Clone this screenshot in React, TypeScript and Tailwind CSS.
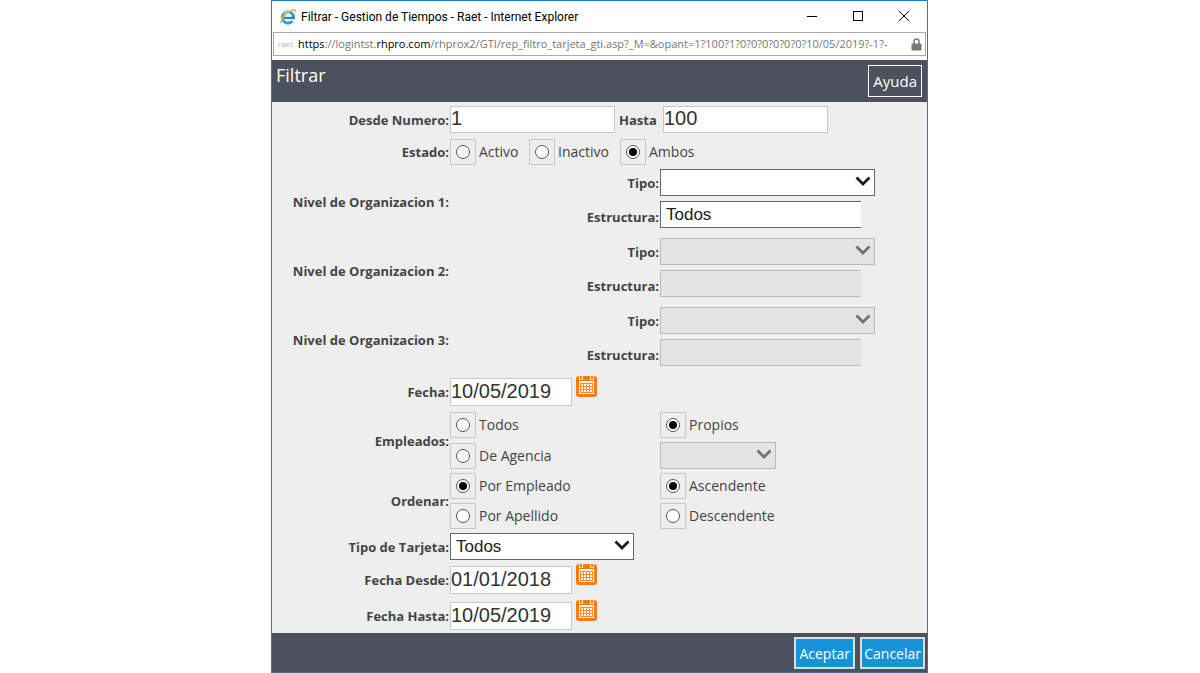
import type { ReactNode } from "react";

const uiFont = "font-['Open_Sans','Noto_Sans',sans-serif]";

function BrowserIcon() {
  return (
    <svg className="size-[18px] shrink-0" viewBox="0 0 18 18" aria-hidden="true">
      <circle cx="9" cy="9.6" r="5.6" fill="none" stroke="#2b9be0" strokeWidth="3" />
      <path d="M4 9.9h11.4" stroke="#1c87d2" strokeWidth="2.2" />
      <path d="M12 11.2h5v2.4h-4z" fill="#fff" />
      <path d="M4.6 6.8A5 5 0 0 1 9 3.8" stroke="#7fd0f7" strokeWidth="1.4" fill="none" />
      <path
        d="M2.6 16.6C-.4 15.4 2 9.4 6.6 5.2 10.6 1.6 15.6-.2 16.7 1.6c.6 1 .1 2.5-.6 3.9.2-1.4.1-2.3-.7-2.6-1.7-.6-5.4 1.6-8.4 4.7-3.6 3.7-5.6 7.7-4.4 9z"
        fill="#f2b62b"
      />
    </svg>
  );
}

function CalendarIcon() {
  return (
    <svg className="block h-[21px] w-[21px]" viewBox="0 0 21 21" aria-hidden="true">
      <rect x="0" y="0" width="21" height="21" rx="3" fill="#ff7a10" />
      <path d="M3 5h15v13H3z" fill="#fff3e8" />
      <path d="M3 0h1v3h2V0h1v4H3zM14 0h1v3h2V0h1v4h-4z" fill="#ffe3cb" />
      <path d="M4 7h13v10H4z" fill="#ff8a2e" />
      <path
        d="M5 8h2v2H5zM8 8h2v2H8zM11 8h2v2h-2zM14 8h2v2h-2zM5 11h2v2H5zM8 11h2v2H8zM11 11h2v2h-2zM14 11h2v2h-2zM5 14h2v2H5zM8 14h2v2H8zM11 14h2v2h-2zM14 14h2v2h-2z"
        fill="#fff"
      />
    </svg>
  );
}

function Radio({ name, label, checked }: { name: string; label: string; checked?: boolean }) {
  return (
    <label className="flex items-center gap-[3px] text-sm">
      <span className="flex size-[26px] shrink-0 items-center justify-center border border-[#c8c8c8]">
        <input
          type="radio"
          name={name}
          defaultChecked={checked}
          className="grid size-[14px] appearance-none place-content-center rounded-full border border-[#555] bg-white before:size-2 before:rounded-full before:content-[''] checked:before:bg-black"
        />
      </span>
      {label}
    </label>
  );
}

function Select({ id, width, value, disabled, label }: { id: string; width: string; value?: string; disabled?: boolean; label?: string }) {
  return (
    <div className={`relative ${width}`}>
      <select
        id={id}
        aria-label={label}
        disabled={disabled}
        className="block h-[27px] w-full appearance-none border border-[#666] bg-white pl-[5px] font-['Liberation_Sans',sans-serif] text-[17px] leading-[24px] text-[#222] disabled:border-[#bbb] disabled:bg-[#e4e4e4] disabled:opacity-100"
      >
        <option>{value ?? ""}</option>
      </select>
      <svg
        className={`pointer-events-none absolute top-[7px] right-1 h-[11px] w-4 ${disabled ? "text-[#707070]" : "text-[#1c1c1c]"}`}
        viewBox="0 0 16 11"
        aria-hidden="true"
      >
        <path d="M1.5 1.5 8 8l6.5-6.5" fill="none" stroke="currentColor" strokeWidth="2.8" />
      </svg>
    </div>
  );
}

const inputStyle =
  "block border border-[#c8c8c8] bg-white pb-[3px] font-['Liberation_Sans',sans-serif] text-xl text-[#333]";

const labelStyle = "pr-px text-right text-[13px] font-bold";

function Row({ label, htmlFor, children, className }: { label: string; htmlFor?: string; children: ReactNode; className?: string }) {
  return (
    <div className={`grid grid-cols-[178px_1fr] items-center ${className ?? ""}`}>
      {htmlFor ? (
        <label htmlFor={htmlFor} className={labelStyle}>{label}</label>
      ) : (
        <span className={labelStyle}>{label}</span>
      )}
      {children}
    </div>
  );
}

function Level({ n, value, disabled }: { n: number; value?: string; disabled?: boolean }) {
  return (
    <div className="grid grid-cols-[178px_1fr] items-center">
      <span className={`${labelStyle} pt-[6px]`}>Nivel de Organizacion {n}:</span>
      <div className="grid grid-cols-[210px_1fr] items-center gap-y-[5px]">
        <label htmlFor={`tipo${n}`} className={labelStyle}>Tipo:</label>
        <Select id={`tipo${n}`} width="w-[215px]" disabled={disabled} />
        <label htmlFor={`estr${n}`} className={`${labelStyle} pt-1`}>Estructura:</label>
        <select
          id={`estr${n}`}
          disabled={disabled}
          className="block h-[27px] w-[201px] appearance-none border border-r-0 border-[#666] bg-white pl-[5px] font-['Liberation_Sans',sans-serif] text-[17px] leading-[24px] text-[#222] disabled:border-[#bbb] disabled:bg-[#e4e4e4] disabled:opacity-100"
        >
          <option>{value ?? ""}</option>
        </select>
      </div>
    </div>
  );
}

function DateRow({ id, label, value, className }: { id: string; label: string; value: string; className?: string }) {
  return (
    <Row label={label} htmlFor={id} className={className}>
      <div className="flex h-7 items-start gap-1">
        <input id={id} defaultValue={value} className={`${inputStyle} h-7 w-[122px]`} />
        <button type="button" aria-label={`Calendario ${label}`} className="-mt-[2px]">
          <CalendarIcon />
        </button>
      </div>
    </Row>
  );
}

export default function App() {
  return (
    <div className={`min-h-screen bg-white pr-px ${uiFont}`}>
      <div className="mx-auto flex min-h-screen w-full max-w-[657px] flex-col border border-[#1c7cc9]">
        <div className="flex h-[31px] items-center pr-[17px] pl-[7px] text-black">
          <BrowserIcon />
          <span className="flex-1 pl-1 font-['Roboto',sans-serif] text-xs">Filtrar - Gestion de Tiempos - Raet - Internet Explorer</span>
          <div className="flex gap-[34px]">
            <button type="button" aria-label="Minimizar">
              <svg className="size-3" viewBox="0 0 12 12"><path d="M1 5.5h10" stroke="#000" /></svg>
            </button>
            <button type="button" aria-label="Maximizar">
              <svg className="size-3" viewBox="0 0 12 12"><rect x="1.5" y="0.5" width="9" height="9" fill="none" stroke="#000" /></svg>
            </button>
            <button type="button" aria-label="Cerrar">
              <svg className="size-3" viewBox="0 0 12 12"><path d="m1 0 10 10M11 0 1 10" stroke="#000" /></svg>
            </button>
          </div>
        </div>
        <div className="mr-[1px] mb-1 ml-[1px] flex h-6 items-center border border-[#a9a9a9] pr-[3px] pl-1">
          <span className="w-5 shrink-0 text-[8px] leading-3 text-[#d99bb0]">ra<span className="text-[#b9b08c]">et</span></span>
          <span className="min-w-0 flex-1 text-[11px] whitespace-nowrap text-[#777]">
            <span className="text-black">https</span>://logintst.<span className="text-black">rhpro.com</span>
            /rhprox2/GTI/rep_filtro_tarjeta_gti.asp?_M=&amp;opant=1?100?1?0?0?0?0?0?0?10/05/2019?-1?-
          </span>
          <svg className="ml-1 h-[13px] w-[11px] shrink-0" viewBox="0 0 11 13" aria-hidden="true">
            <path d="M3 6V3.5a2.5 2.5 0 0 1 5 0V6" fill="none" stroke="#777" strokeWidth="1.5" />
            <rect x="0.5" y="5.5" width="10" height="7" rx="1" fill="#777" />
          </svg>
        </div>
        <header className="flex h-[42px] items-start justify-between bg-[#4d515d] pt-1 pr-[5px] pl-1 text-white">
          <h1 className="text-lg leading-[22px]">Filtrar</h1>
          <button type="button" className="mt-px h-8 border border-white px-1 text-[15px]">Ayuda</button>
        </header>
        <main className="flex-1 bg-[#eee] pt-1 leading-5 text-[#444]">
          <Row label="Desde Numero:" htmlFor="desde">
            <div className="flex items-center">
              <input id="desde" defaultValue="1" className={`${inputStyle} h-[27px] w-[165px]`} />
              <label htmlFor="hasta" className="w-12 pl-1 text-[13px] font-bold">Hasta</label>
              <input id="hasta" defaultValue="100" className={`${inputStyle} h-[27px] w-[165px]`} />
            </div>
          </Row>
          <Row label="Estado:" className="mt-[6px] mb-1">
            <div className="flex">
              <div className="w-[79px]"><Radio name="estado" label="Activo" /></div>
              <div className="w-[91px]"><Radio name="estado" label="Inactivo" /></div>
              <Radio name="estado" label="Ambos" checked />
            </div>
          </Row>
          <div className="grid gap-[10px]">
            <Level n={1} value="Todos" />
            <Level n={2} disabled />
            <Level n={3} disabled />
          </div>
          <DateRow id="fecha" label="Fecha:" value="10/05/2019" className="mt-3 mb-[6px]" />
          <Row label="Empleados:">
            <div className="grid grid-cols-[210px_1fr] items-center gap-y-1">
              <Radio name="empleados" label="Todos" />
              <Radio name="empleados" label="Propios" checked />
              <Radio name="empleados" label="De Agencia" />
              <Select id="agencia" label="Agencia" width="w-[116px]" disabled />
            </div>
          </Row>
          <Row label="Ordenar:" className="my-1">
            <div className="grid grid-cols-[210px_1fr] items-center gap-y-1">
              <Radio name="orden" label="Por Empleado" checked />
              <Radio name="sentido" label="Ascendente" checked />
              <Radio name="orden" label="Por Apellido" />
              <Radio name="sentido" label="Descendente" />
            </div>
          </Row>
          <Row label="Tipo de Tarjeta:" htmlFor="tarjeta">
            <Select id="tarjeta" width="w-[184px]" value="Todos" />
          </Row>
          <DateRow id="fdesde" label="Fecha Desde:" value="01/01/2018" className="mt-[6px] mb-2" />
          <DateRow id="fhasta" label="Fecha Hasta:" value="10/05/2019" />
        </main>
        <footer className="flex h-[39px] items-start justify-end gap-[5px] bg-[#4d515d] pt-1 pr-[2px] text-sm text-white">
          <button type="button" className="h-8 min-w-[61px] border-2 border-[#ddd] bg-[#1793d8] px-[2px] pt-px">Aceptar</button>
          <button type="button" className="h-8 min-w-[61px] border-2 border-[#ddd] bg-[#1793d8] px-[2px] pt-px">Cancelar</button>
        </footer>
      </div>
    </div>
  );
}
